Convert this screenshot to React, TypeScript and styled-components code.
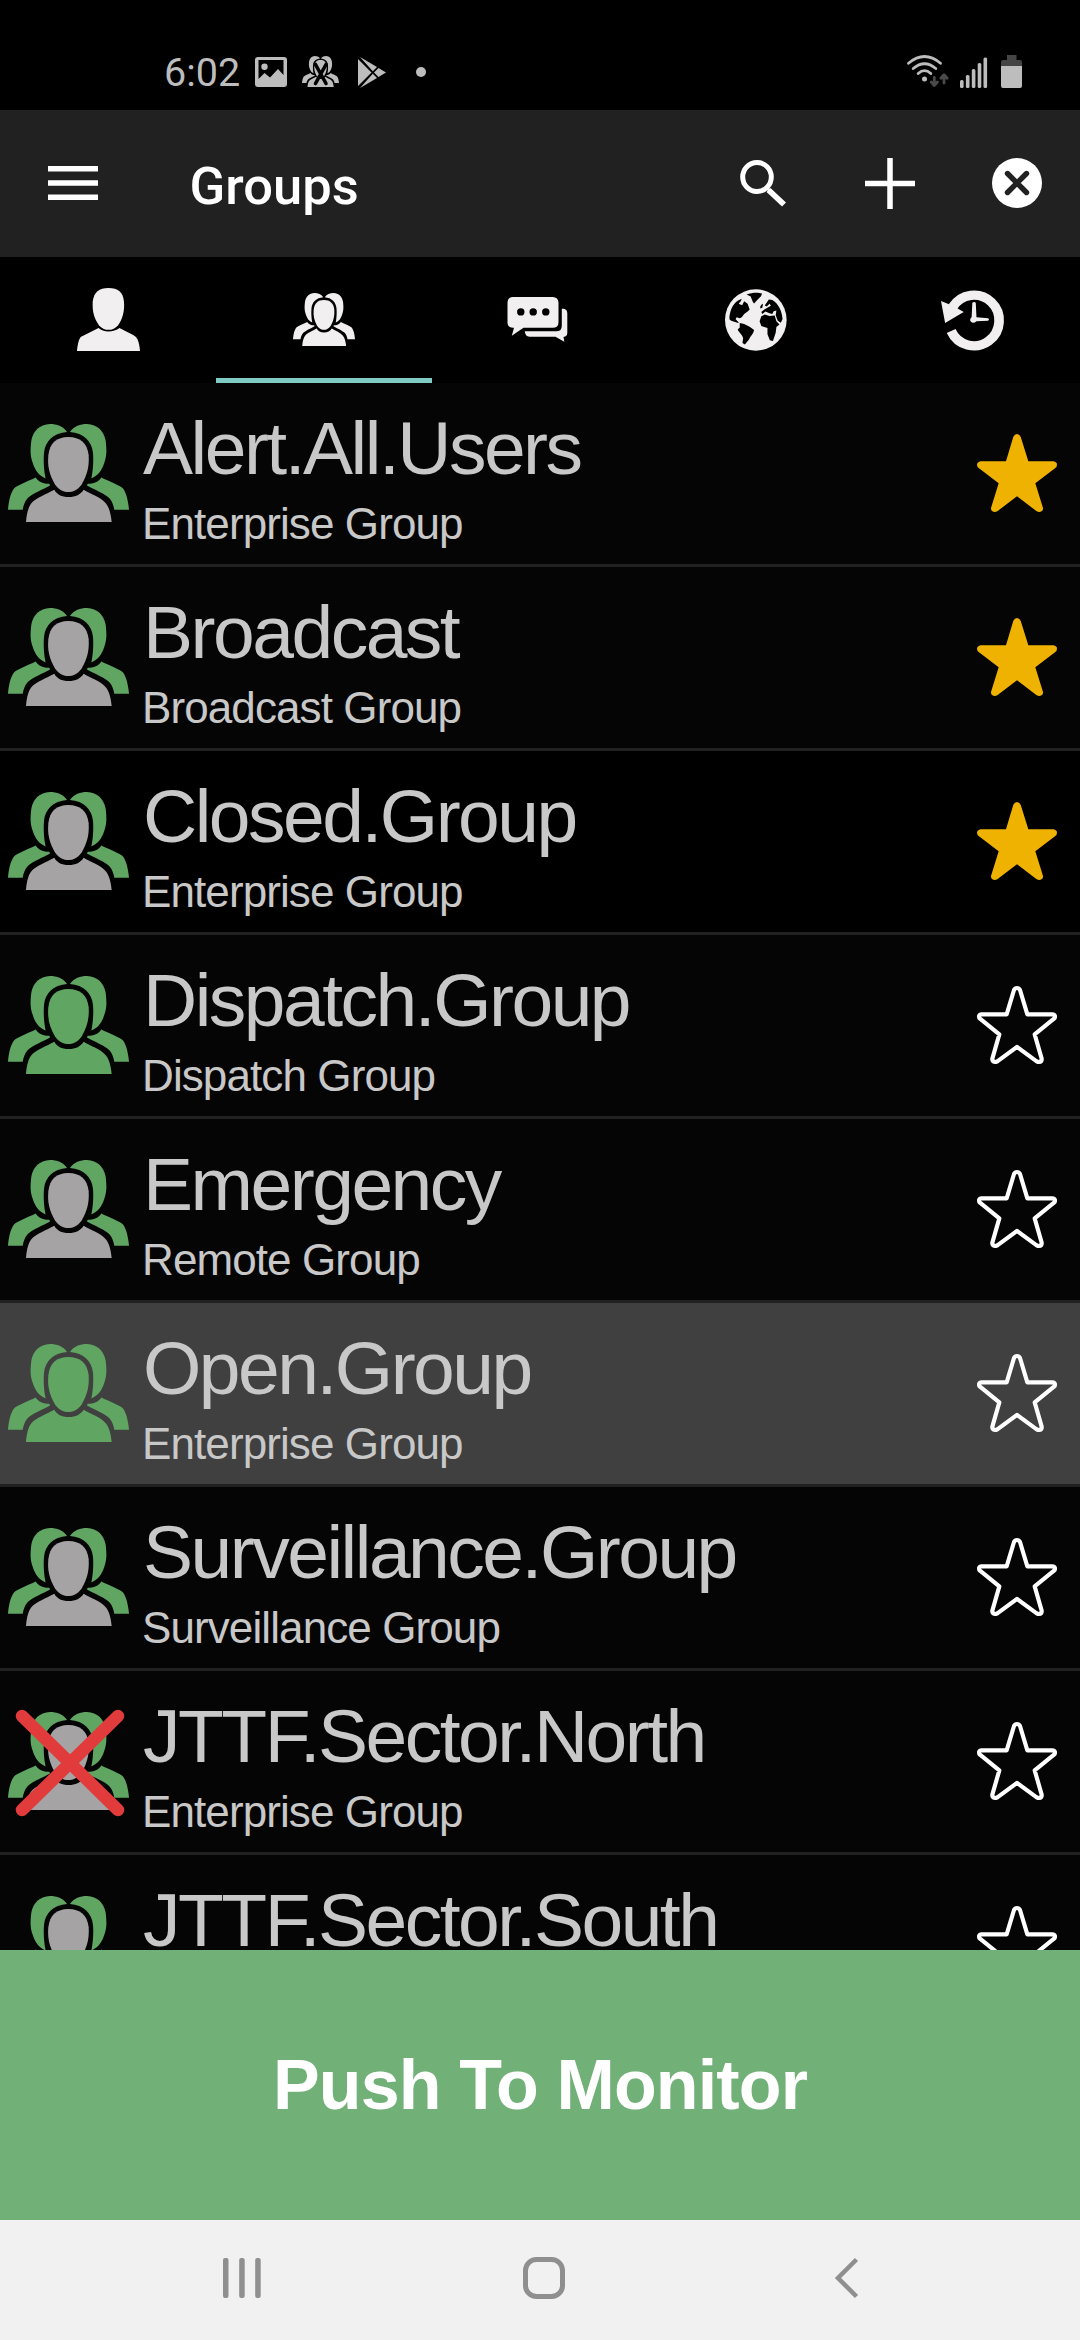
import React from "react";
import styled, { createGlobalStyle } from "styled-components";

const Global = createGlobalStyle`
  html, body { margin: 0; padding: 0; background: #000; }
  * { box-sizing: border-box; }
`;

const Screen = styled.div`
  display: flex;
  flex-direction: column;
  width: 1080px;
  height: 2340px;
  overflow: hidden;
  background: #000;
  font-family: "Liberation Sans", Arial, sans-serif;
`;

const Art = styled.svg<{ $ml?: number; $mt?: number; $mr?: number }>`
  display: block;
  flex: none;
  overflow: visible;
  margin: ${(p) => p.$mt ?? 0}px ${(p) => p.$mr ?? 0}px 0 ${(p) => p.$ml ?? 0}px;
`;

const StatusBar = styled.div`
  display: flex;
  justify-content: space-between;
  flex: none;
  height: 110px;
  padding: 55px 58px 0 164px;
  color: #bdbdbd;
`;

const StatusSide = styled.div`
  display: flex;
  align-items: flex-start;
  height: 36px;
`;

const Clock = styled.span`
  width: 91px;
  font-family: Roboto, sans-serif;
  font-size: 39.5px;
  line-height: 36px;
`;

const AppBar = styled.header`
  display: flex;
  align-items: center;
  flex: none;
  height: 147px;
  padding: 0 38px 1px 48px;
  background: #212121;
  color: #fff;
`;

const Title = styled.h1`
  flex: 1;
  margin: 0 0 0 91.5px;
  font-family: Roboto, sans-serif;
  font-size: 52.5px;
  font-weight: 500;
  line-height: 62px;
  padding-top: 5px;
`;

const Actions = styled.div`
  display: flex;
  align-items: center;
  gap: 77px;
`;

const Tabs = styled.nav`
  display: grid;
  grid-template-columns: repeat(5, 1fr);
  flex: none;
  height: 126px;
  color: #f1eff0;
`;

const Tab = styled.div<{ $active?: boolean }>`
  display: flex;
  align-items: center;
  justify-content: center;
  padding-top: 4px;
  border-bottom: 5px solid ${(p) => (p.$active ? "#80cbc4" : "transparent")};
`;

const List = styled.main`
  flex: none;
  height: 1567px;
  overflow: hidden;
`;

const Row = styled.div<{ $bg: string }>`
  display: flex;
  align-items: flex-start;
  height: 184px;
  padding: 0 23px 0 8px;
  border-bottom: 3px solid #212121;
  background: ${(p) => p.$bg};
`;

const Avatar = styled.div`
  position: relative;
  flex: none;
  width: 121px;
  margin-top: 40.6px;
`;

const BlockedMark = styled(Art)`
  position: absolute;
  left: 8px;
  top: -1.6px;
`;

const Labels = styled.div`
  flex: 1;
  padding: 23px 0 0 14px;
  color: #c8c8c8;
  white-space: nowrap;
`;

const Name = styled.div`
  font-size: 75px;
  line-height: 84px;
  letter-spacing: -2.5px;
`;

const Kind = styled.div`
  margin-top: 9px;
  margin-left: -1px;
  font-size: 44px;
  line-height: 50px;
  letter-spacing: -0.9px;
`;

const Favourite = styled.div`
  flex: none;
  margin-top: 51px;
`;

const MonitorButton = styled.button`
  flex: none;
  height: 270px;
  border: 0;
  padding: 0;
  background: #71b077;
  color: #fff;
  font-family: "Liberation Sans", Arial, sans-serif;
  font-size: 70px;
  font-weight: 700;
  letter-spacing: -0.85px;
`;

const NavBar = styled.footer`
  display: flex;
  justify-content: space-between;
  align-items: center;
  flex: none;
  height: 120px;
  padding: 0 222px 4px 223px;
  background: #f1f1f1;
  color: #8f8f8f;
`;

const hair =
  "M201 152C190 135 170 128 150 128C118 130 100 148 94 178C91 205 90 222 98 245C106 270 118 285 137 292C132 270 130 240 132 215C135 180 160 155 201 152Z";
const shoulder =
  "M107 289C115 302 130 308 148 308L150 313C130 325 95 338 82 352C73 363 70 375 68 386H24C26 360 32 335 42 322C50 313 85 300 107 289Z";

function People({ w, h, back, front }: { w: number; h: number; back: string; front: string }) {
  return (
    <Art width={w} height={h} viewBox="24 128 363 295" preserveAspectRatio="none">
      <g fill={back}>
        <path d={hair} />
        <path d={shoulder} />
        <g transform="translate(411 0) scale(-1 1)">
          <path d={hair} />
          <path d={shoulder} />
        </g>
      </g>
      <g fill={front}>
        <path d="M205 167C240 167 262 185 266 222C268 255 262 280 245 310C232 328 218 333 205 333C192 333 178 328 165 310C148 280 142 255 145 222C149 185 170 167 205 167Z" />
        <path d="M163 326C170 340 185 348 206 348C227 348 242 340 251 326C275 340 300 348 315 364C327 375 333 400 335 423H78C80 395 86 375 96 364C106 353 140 338 163 326Z" />
      </g>
    </Art>
  );
}

function Star({ on }: { on: boolean }) {
  return (
    <Art width="80" height="78" viewBox="771 162 240 234">
      {on ? (
        <path
          fill="#f0b200"
          d="M880 170Q884 162 891 162Q898 162 902 170L925 244H1000Q1011 246 1011 254Q1011 261 1005 265L946 310L969 384Q970 394 959 396Q953 396 949 393L891 349L833 393Q829 396 823 396Q812 394 813 384L836 310L777 265Q771 261 771 254Q772 246 782 244H858Z"
        />
      ) : (
        <path
          fill="none"
          stroke="#fff"
          strokeWidth="12.500"
          strokeLinejoin="round"
          d="M882 174Q885 168 891 168Q897 168 900 174L922 247H998Q1005 248 1005 254Q1005 258 1002 260L944 307L965 380Q966 389 957 390Q954 390 950 388L891 345L832 388Q828 390 825 390Q816 389 817 380L838 307L780 260Q777 258 777 254Q777 248 784 247H860Z"
        />
      )}
    </Art>
  );
}

const GREEN = "#60a561";
const GREY = "#a6a3a5";

type Group = { name: string; kind?: string; joined?: boolean; fav?: boolean; bg?: string; blocked?: boolean };

const groups: Group[] = [
  { name: "Alert.All.Users", kind: "Enterprise Group", fav: true },
  { name: "Broadcast", kind: "Broadcast Group", fav: true },
  { name: "Closed.Group", kind: "Enterprise Group", fav: true, bg: "#000" },
  { name: "Dispatch.Group", kind: "Dispatch Group", joined: true },
  { name: "Emergency", kind: "Remote Group" },
  { name: "Open.Group", kind: "Enterprise Group", joined: true, bg: "#404040" },
  { name: "Surveillance.Group", kind: "Surveillance Group" },
  { name: "JTTF.Sector.North", kind: "Enterprise Group", blocked: true },
  { name: "JTTF.Sector.South" },
];

function Status() {
  return (
    <StatusBar>
      <StatusSide>
        <Clock>6:02</Clock>
        <Art width="32" height="31" viewBox="0 0 32 31" $mt={2}>
          <path
            fill="currentColor"
            fillRule="evenodd"
            d="M3 0H29Q32 0 32 3V27Q32 30 29 30H3Q0 30 0 27V3Q0 0 3 0ZM3.5 3V22L9.500 16L15 20.500L23 12L28.500 18V3ZM9.500 6.500A3.200 3.200 0 1 1 9.500 12.900A3.200 3.200 0 1 1 9.500 6.500Z"
          />
        </Art>
        <Art width="37" height="31" viewBox="0 0 37 31" $ml={15} $mt={1}>
          <People w={37} h={31} back="#bdbdbd" front="#bdbdbd" />
          <path d="M13.500 8.500L24 27.500M24 8.500L13.500 27.500" stroke="#000" strokeWidth="3.600" strokeLinecap="round" />
        </Art>
        <Art width="28" height="31" viewBox="0 0 28 31" $ml={19} $mt={2}>
          <path
            fill="currentColor"
            d="M0 2L13.500 15.500L0 29ZM2 0L19 10L14.800 14.200ZM2 31L19 21L14.800 16.800ZM16 15.500L20.500 11L28 15.500L20.500 20Z"
          />
        </Art>
        <Art width="10" height="10" viewBox="0 0 10 10" $ml={30} $mt={12}>
          <circle cx="5" cy="5" r="5" fill="currentColor" />
        </Art>
      </StatusSide>
      <StatusSide>
        <Art width="41" height="33" viewBox="0 0 41 33">
          <g fill="none" stroke="currentColor" strokeWidth="2.800" strokeLinecap="round">
            <path d="M1.500 8.300Q17.500 -5.300 33.500 8.300" />
            <path d="M6.200 13.500Q17.500 4 28.800 13.500" />
            <path d="M11.200 18.500Q17.500 12.700 23.800 18.500" />
          </g>
          <circle cx="17.500" cy="24" r="2.500" fill="currentColor" />
          <g fill="none" stroke="#4a4a4a" strokeWidth="2.800" strokeLinejoin="round" strokeLinecap="round">
            <path d="M27.300 22.500V30M24.200 27L27.300 30.500L30.400 27" />
            <path d="M37 28V20.500M33.900 23.300L37 19.800L40.100 23.300" />
          </g>
        </Art>
        <Art width="28" height="31" viewBox="0 0 28 31" $ml={12} $mt={2}>
          <g fill="currentColor">
            <rect x="0" y="23" width="3.600" height="8" rx="1.500" />
            <rect x="5.900" y="18" width="3.600" height="13" rx="1.500" />
            <rect x="11.800" y="12" width="3.600" height="19" rx="1.500" />
            <rect x="17.700" y="6" width="3.600" height="25" rx="1.500" />
            <rect x="23.500" y="0.500" width="3.600" height="30.500" rx="1.500" />
          </g>
        </Art>
        <Art width="21" height="33" viewBox="0 0 21 33" $ml={13}>
          <path fill="#454545" d="M6 0H15.500V5H19Q21 5 21 7V12H0V7Q0 5 2 5H6Z" />
          <path fill="currentColor" d="M0 11H21V31Q21 33 19 33H2Q0 33 0 31Z" />
        </Art>
      </StatusSide>
    </StatusBar>
  );
}

export default function App() {
  return (
    <>
      <Global />
      <Screen>
        <Status />
        <AppBar>
          <Art width="50" height="34" viewBox="0 0 50 34" fill="currentColor">
            <rect width="50" height="5.500" />
            <rect y="14.250" width="50" height="5.500" />
            <rect y="28.500" width="50" height="5.500" />
          </Art>
          <Title>Groups</Title>
          <Actions>
            <Art width="46" height="46" viewBox="0 0 46 46" fill="none" stroke="currentColor" $mr={2}>
              <ellipse cx="17" cy="17" rx="14.300" ry="14.500" strokeWidth="5" />
              <path d="M28.500 30L44 44.500" strokeWidth="5.800" />
              <path d="M26 27L30 31" strokeWidth="3" />
            </Art>
            <Art width="50" height="51" viewBox="0 0 50 51" fill="none" stroke="currentColor" strokeWidth="5.500">
              <path d="M25 0V51M0 25.500H50" />
            </Art>
            <Art width="50" height="50" viewBox="0 0 50 50">
              <circle cx="25" cy="25" r="25" fill="currentColor" />
              <path d="M15.500 15.500L34.500 34.500M34.500 15.500L15.500 34.500" stroke="#212121" strokeWidth="5.400" strokeLinecap="round" />
            </Art>
          </Actions>
        </AppBar>
        <Tabs>
          <Tab>
            <Art width="63" height="63" viewBox="0 0 184 190" preserveAspectRatio="none" fill="currentColor">
              <path d="M92 0C120 0 134 12 137 40C140 70 132 95 120 112C112 122 103 126 92 126C81 126 72 122 64 112C50 92 44 70 46 40C50 12 64 0 92 0Z" />
              <path d="M63 121C70 128 80 131 92 131C104 131 116 128 124 121L164 142Q174 147 177 155C181 165 183 175 184 190H0C2 168 6 152 12 147Z" />
            </Art>
          </Tab>
          <Tab $active>
            <People w={62} h={53} back="#f1eff0" front="#f1eff0" />
          </Tab>
          <Tab>
            <Art width="61" height="45" viewBox="506.500 297.200 61 45" fill="currentColor" $mr={6}>
              <path
                fillRule="evenodd"
                d="M512.500 297.300H552Q558 297.300 558 303.300V322.500Q558 328 552 328H523L511.300 336L513.500 328H512.500Q507 328 507 322.500V303.300Q507 297.300 512.500 297.300ZM520.300 308.400A3.700 3.700 0 1 0 520.300 315.800A3.700 3.700 0 1 0 520.300 308.400ZM532.700 308.400A3.700 3.700 0 1 0 532.700 315.800A3.700 3.700 0 1 0 532.700 308.400ZM545.300 308.400A3.700 3.700 0 1 0 545.300 315.800A3.700 3.700 0 1 0 545.300 308.400Z"
              />
              <path d="M561.300 309C566 309 566.800 311 566.800 314V333Q566.800 336.800 563 337.300L563.800 342L555 337H529Q524.500 336.500 524.300 331.500H556Q561.300 331.500 561.300 326Z" />
            </Art>
          </Tab>
          <Tab>
            <Art width="62" height="62" viewBox="534 116 181 184" preserveAspectRatio="none">
              <ellipse cx="624" cy="208" rx="90" ry="91" fill="currentColor" />
              <g fill="#000">
                <path d="M597 132C612 126 632 126 642 129C640 140 633 142 628 149L619 159C614 154 613 147 609 138Z" />
                <path d="M547 206C546 185 556 160 572 150L583 145L580 152L574 160L584 164L590 152L600 160L606 177L600 183L590 190L583 200L577 203L568 200L565 206L575 216L570 216L552 210Z" />
                <path d="M577 217L590 220L606 228L619 238C617 250 608 256 604 266L592 281L585 276L587 262C584 250 574 245 571 236L577 230Z" />
                <path d="M640 197L650 192L664 196L679 195L684 212L693 221L684 229L682 246L674 270L665 268L658 250L658 232L640 226L635 212Z" />
                <path d="M650 165L662 147L672 149C690 160 700 180 702 205L697 216L688 210L682 194L684 180L676 182L672 190L664 188L652 183L643 190L640 184L650 176L668 166L664 160L656 168Z" />
                <path d="M637 168L641 162L645 160L643 172L637 174Z" />
              </g>
            </Art>
          </Tab>
          <Tab>
            <Art width="63" height="60" viewBox="1161 117 183 180" preserveAspectRatio="none" fill="currentColor">
              <path d="M1195 168A73 76 0 1 1 1190.500 240" fill="none" stroke="currentColor" strokeWidth="28" />
              <path d="M1161 150L1184 160L1208 172L1227 183L1173 216Z" />
              <path d="M1252 155Q1257 151 1262 155L1264 199L1298 202Q1303 206 1298 209L1264 211C1260 217 1250 217 1246 209C1245 204 1248 201 1250 198Z" />
            </Art>
          </Tab>
        </Tabs>
        <List>
          {groups.map((g) => (
            <Row key={g.name} $bg={g.bg ?? "#050505"}>
              <Avatar>
                <People w={121} h={98} back={GREEN} front={g.joined ? GREEN : GREY} />
                {g.blocked && (
                  <BlockedMark width="108" height="106" viewBox="0 0 108 106">
                    <path d="M6 6L102 100M102 6L6 100" stroke="#e23b3b" strokeWidth="12.500" strokeLinecap="round" />
                  </BlockedMark>
                )}
              </Avatar>
              <Labels>
                <Name>{g.name}</Name>
                {g.kind && <Kind>{g.kind}</Kind>}
              </Labels>
              <Favourite>
                <Star on={!!g.fav} />
              </Favourite>
            </Row>
          ))}
        </List>
        <MonitorButton>Push To Monitor</MonitorButton>
        <NavBar>
          <Art width="38" height="40" viewBox="0 0 38 40" fill="currentColor">
            <rect width="5.500" height="40" rx="2" />
            <rect x="16.200" width="5.500" height="40" rx="2" />
            <rect x="32.200" width="5.500" height="40" rx="2" />
          </Art>
          <Art width="42" height="42" viewBox="0 0 42 42" fill="none" stroke="currentColor" strokeWidth="5" $mr={8}>
            <rect x="2.500" y="2.500" width="37" height="37" rx="11" />
          </Art>
          <Art width="23" height="40" viewBox="0 0 23 40" fill="none" stroke="currentColor" strokeWidth="4.500">
            <path d="M21.500 1.500L3 20L21.500 38.500" />
          </Art>
        </NavBar>
      </Screen>
    </>
  );
}
